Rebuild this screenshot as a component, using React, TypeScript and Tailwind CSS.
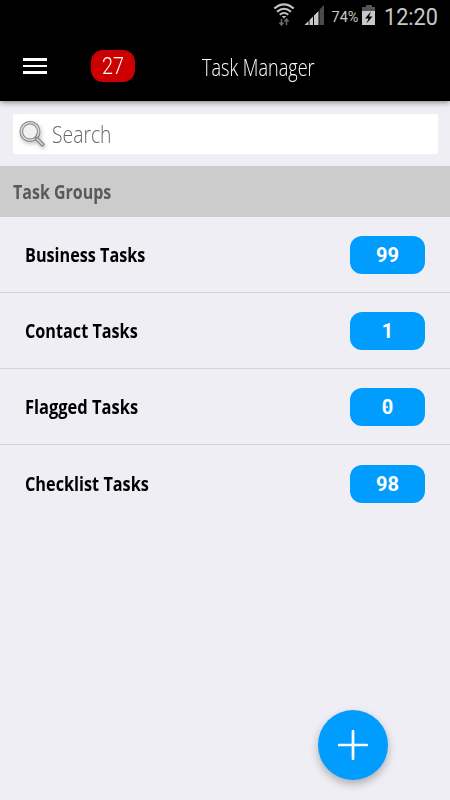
import React from 'react';

const font = "font-['Open_Sans',sans-serif]";

const groups = [
  { name: 'Business Tasks', count: 99, scale: 'scale-x-[0.81]' },
  { name: 'Contact Tasks', count: 1, scale: 'scale-x-[0.81]' },
  { name: 'Flagged Tasks', count: 0, scale: 'scale-x-[0.823]' },
  { name: 'Checklist Tasks', count: 98, scale: 'scale-x-[0.813]' },
];

function StatusBar() {
  return (
    <div className="flex h-[34px] justify-end font-['Roboto',sans-serif]">
      <svg width="180" height="34" viewBox="270 0 180 34">
        <g fill="none" stroke="#c4c4c4" strokeWidth="2">
          <path d="M274.300 8.500Q284 .2 293.700 8.500" />
          <path d="M277 11.800Q284 5.600 291 11.800" />
          <path d="M279.800 14.800Q284 11.300 288.200 14.800" />
        </g>
        <path d="M281.700 16h4.600L284 18.500z" fill="#c4c4c4" />
        <path d="M281.500 25v-6m-2 3.500 2 2.500 2-2.500M286.500 25v-6m-2 2.500 2-2.500 2 2.500" fill="none" stroke="#686868" strokeWidth="1.500" />
        <path d="M304.500 25l4-4v4z" fill="#c8c8c8" />
        <path d="M309.500 20l3.500-3.500V25h-3.500zM314 15.500l4.500-4.500v14H314z" fill="#c8c8c8" />
        <path d="M319.500 9.500l4.500-4.500v20h-4.500z" fill="#4b4b4b" />
        <text x="331.500" y="21.500" fontSize="14" textLength="27" lengthAdjust="spacingAndGlyphs" fill="#c8c8c8">74%</text>
        <path d="M366 5h6v2h3v5h-13V7h4z" fill="#555" />
        <path d="M362 11h13v14h-13z" fill="#c8c8c8" />
        <path d="M371 11.500l-6 7h3.500l-2 5 6-7H369z" fill="#000" />
        <text x="384" y="24.500" fontSize="23" textLength="54" lengthAdjust="spacingAndGlyphs" fill="#c8c8c8">12:20</text>
      </svg>
    </div>
  );
}

function SearchIcon() {
  return (
    <svg className="shrink-0 drop-shadow-[1px_2px_2px_rgba(0,0,0,0.25)]" width="28" height="30" viewBox="18 118 28 30">
      <circle cx="30" cy="130.500" r="8.700" fill="#f1f1f1" stroke="#858585" strokeWidth="3.600" />
      <circle cx="30" cy="130.500" r="8.700" fill="none" stroke="#dadada" strokeWidth="1.600" />
      <path d="M36.500 137.500l6 6" stroke="#858585" strokeWidth="4" strokeLinecap="round" />
      <path d="M37 138l5.500 5.500" stroke="#dadada" strokeWidth="1.600" strokeLinecap="round" />
    </svg>
  );
}

export default function App() {
  return (
    <div className={`relative h-[800px] w-[450px] overflow-hidden bg-[#efeef4] ${font}`}>
      <header className="h-[101px] bg-black shadow-[0_1px_6px_rgba(0,0,0,0.5)]">
        <StatusBar />
        <div className="flex h-[64px] items-center pl-[23px] text-white">
          <button className="flex w-6 flex-col gap-[4px]" aria-label="Menu">
            <span className="h-[2.500px] w-6 bg-white" />
            <span className="h-[2.500px] w-6 bg-white" />
            <span className="h-[2.500px] w-6 bg-white" />
          </button>
          <div className="ml-[44px] flex h-8 w-[44px] items-center justify-center rounded-[12px] bg-[#cc0000] pt-px font-['Roboto',sans-serif] text-[23.500px] leading-none font-light">
            <span className="inline-block scale-x-[0.84]">27</span>
          </div>
          <h1 className="ml-[67px] origin-left scale-x-[0.785] pt-[2px] text-[23px] leading-none font-light whitespace-nowrap">Task Manager</h1>
        </div>
      </header>
      <div className="h-[65px] px-[12.500px] pt-[12.500px]">
        <div className="flex h-10 items-center rounded-[2px] bg-white pl-[5.500px] text-[23px] leading-none font-light text-[#666]">
          <SearchIcon />
          <span className="ml-[6px] origin-left scale-x-[0.84] pt-[2px]">Search</span>
        </div>
      </div>
      <h2 className="flex h-[50.500px] items-center bg-[#cccccc] pl-[12.500px] text-[20px] leading-none font-bold text-[#595959]">
        <span className="origin-left scale-x-[0.8] pt-[2px] whitespace-nowrap">Task Groups</span>
      </h2>
      <ul>
        {groups.map((g, i) => (
          <li key={g.name} className={`flex h-[76.200px] items-center justify-between border-[#d2d1d7] pr-[25px] pl-[25px] ${i < 3 ? 'border-b' : ''}`}>
            <span className={`origin-left pt-[2px] text-[20px] leading-none font-bold whitespace-nowrap text-black ${g.scale}`}>{g.name}</span>
            <span className="mt-px flex h-[38px] w-[75px] items-center justify-center rounded-[12px] bg-[#009dff] pt-px font-['Roboto',sans-serif] text-[20px] leading-none font-bold text-white">
              <span className="relative">
                {g.count}
                {g.count === 0 && <span className="absolute top-[9px] left-[4.700px] size-[2px] rounded-full bg-white" />}
              </span>
            </span>
          </li>
        ))}
      </ul>
      <button aria-label="Add task" className="absolute top-[710px] left-[317.500px] flex size-[70px] items-center justify-center rounded-full bg-[#009dff] shadow-[0_4px_9px_rgba(0,0,0,0.28)]">
        <svg width="30" height="30" viewBox="0 0 30 30">
          <path d="M15 1.200v27.600M1.200 15h27.600" stroke="white" strokeWidth="2.700" strokeLinecap="round" />
        </svg>
      </button>
    </div>
  );
}
